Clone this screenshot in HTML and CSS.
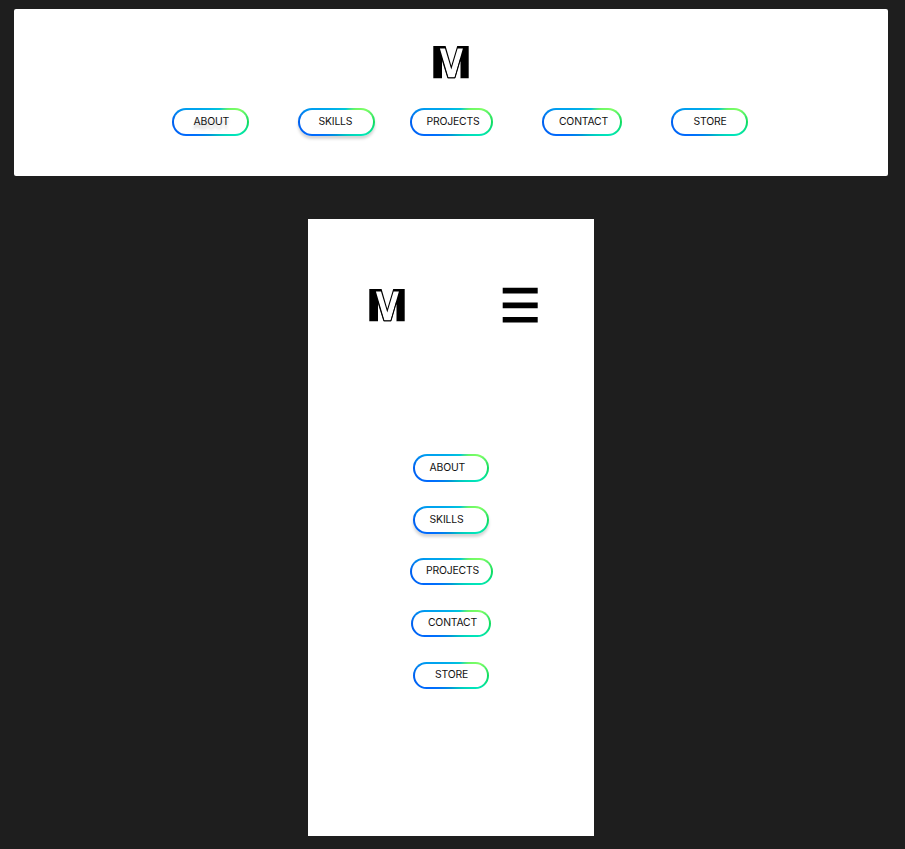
FILE: index.html
```html
<!DOCTYPE html>
<html lang="en">
<head>
<meta charset="utf-8">
<title>Navigation</title>
<link rel="stylesheet" href="styles.css">
</head>
<body>
<svg width="0" height="0" class="defs">
  <symbol id="logo" viewBox="0 0 36 33">
    <g transform="translate(.3 0)">
    <path d="M0 0H12.3L18 19.7L23.9 0H35.4V32.2H27V15L21.9 32.2H14.4L8.7 14V32.2H0Z" fill="#000"/>
    <path d="M8.7 14.5V32.4H13.9ZM27 15.5V32.4H22.3Z" fill="#fff"/>
    <path d="M6.6 2.4H11.7L18 23.6L24.3 2.4H29.6L21.2 31.4H15.1Z" fill="#fff"/>
    <path d="M8.3 12L14.5 31.8H21.7L27.5 12" fill="none" stroke="#000" stroke-width=".9"/>
    </g>
  </symbol>
</svg>
<header class="desktop">
  <svg class="logo"><use href="#logo"/></svg>
  <nav class="bar">
    <a class="pill about">ABOUT</a>
    <a class="pill skills">SKILLS</a>
    <a class="pill projects">PROJECTS</a>
    <a class="pill contact">CONTACT</a>
    <a class="pill store">STORE</a>
  </nav>
</header>
<main class="mobile">
  <div class="top">
    <svg class="logo"><use href="#logo"/></svg>
    <svg class="burger" viewBox="0 0 36 36"><path d="M.7 .8H35.7V6.6H.7ZM.7 15.4H35.7V21.2H.7ZM.7 29.9H35.7V35.6H.7Z"/></svg>
  </div>
  <nav class="stack">
    <a class="pill about">ABOUT</a>
    <a class="pill skills">SKILLS</a>
    <a class="pill projects">PROJECTS</a>
    <a class="pill contact">CONTACT</a>
    <a class="pill store">STORE</a>
  </nav>
</main>
</body>
</html>
```
FILE: styles.css
```css
* { box-sizing: border-box; }
body {
  margin: 0;
  height: 849px;
  overflow: hidden;
  padding: 9px 17px 0 14px;
  background: #1e1e1e;
  font-family: Inter, "Liberation Sans", sans-serif;
  display: flex;
  flex-direction: column;
  align-items: center;
}
.defs { position: absolute; }
.desktop {
  width: 874px;
  height: 166.7px;
  flex: none;
  background: #fff;
  border-radius: 2px;
  padding-top: 37px;
  display: flex;
  flex-direction: column;
  align-items: center;
}
.logo { width: 36px; height: 33px; display: block; flex: none; }
.bar {
  display: flex;
  align-self: flex-start;
  margin: 29.4px 0 0 158px;
}
.pill {
  width: 76.8px;
  height: 27.4px;
  flex: none;
  border: 2px solid transparent;
  border-radius: 14px;
  background:
    linear-gradient(#fff, #fff) padding-box,
    conic-gradient(#00b4e8 0deg, #00c8d8 35deg, #6df765 55deg, #7dff66 68deg, #10dc60 90deg, #00e8b8 115deg, #00d0c0 135deg, #0098d8 180deg, #006cff 235deg, #0060f0 270deg, #00a0f0 298deg, #00b4e8 360deg) border-box;
  font-size: 10.4px;
  letter-spacing: -0.17px;
  line-height: 22.6px;
  color: #111;
  white-space: nowrap;
}
.about { padding-left: 19.5px; }
.skills { padding-left: 18.5px; box-shadow: 0 3px 3px rgba(0, 0, 0, .17); }
.projects { width: 83px; padding-left: 14.5px; }
.contact { width: 80.5px; padding-left: 15.2px; }
.store { padding-left: 20.5px; }
.bar .pill { line-height: 24px; }
.bar .about { text-shadow: 0 4px 3px rgba(0, 0, 0, .22); }
.bar .skills { margin-left: 49.2px; }
.bar .projects { margin-left: 35.2px; }
.bar .contact { margin-left: 48.8px; }
.bar .store { margin-left: 48.7px; }
.mobile {
  width: 286px;
  height: 617px;
  flex: none;
  margin-top: 43.3px;
  background: #fff;
}
.top {
  display: flex;
  justify-content: space-between;
  align-items: flex-start;
  padding: 68px 56px 0 60.7px;
}
.top .logo { margin-top: 2px; }
.burger { width: 36px; height: 36px; display: block; }
.stack {
  display: flex;
  flex-direction: column;
  align-items: center;
  gap: 24.4px;
  margin-top: 131.4px;
}
.stack .about, .stack .skills { padding-left: 15px; line-height: 23.6px; }
```
